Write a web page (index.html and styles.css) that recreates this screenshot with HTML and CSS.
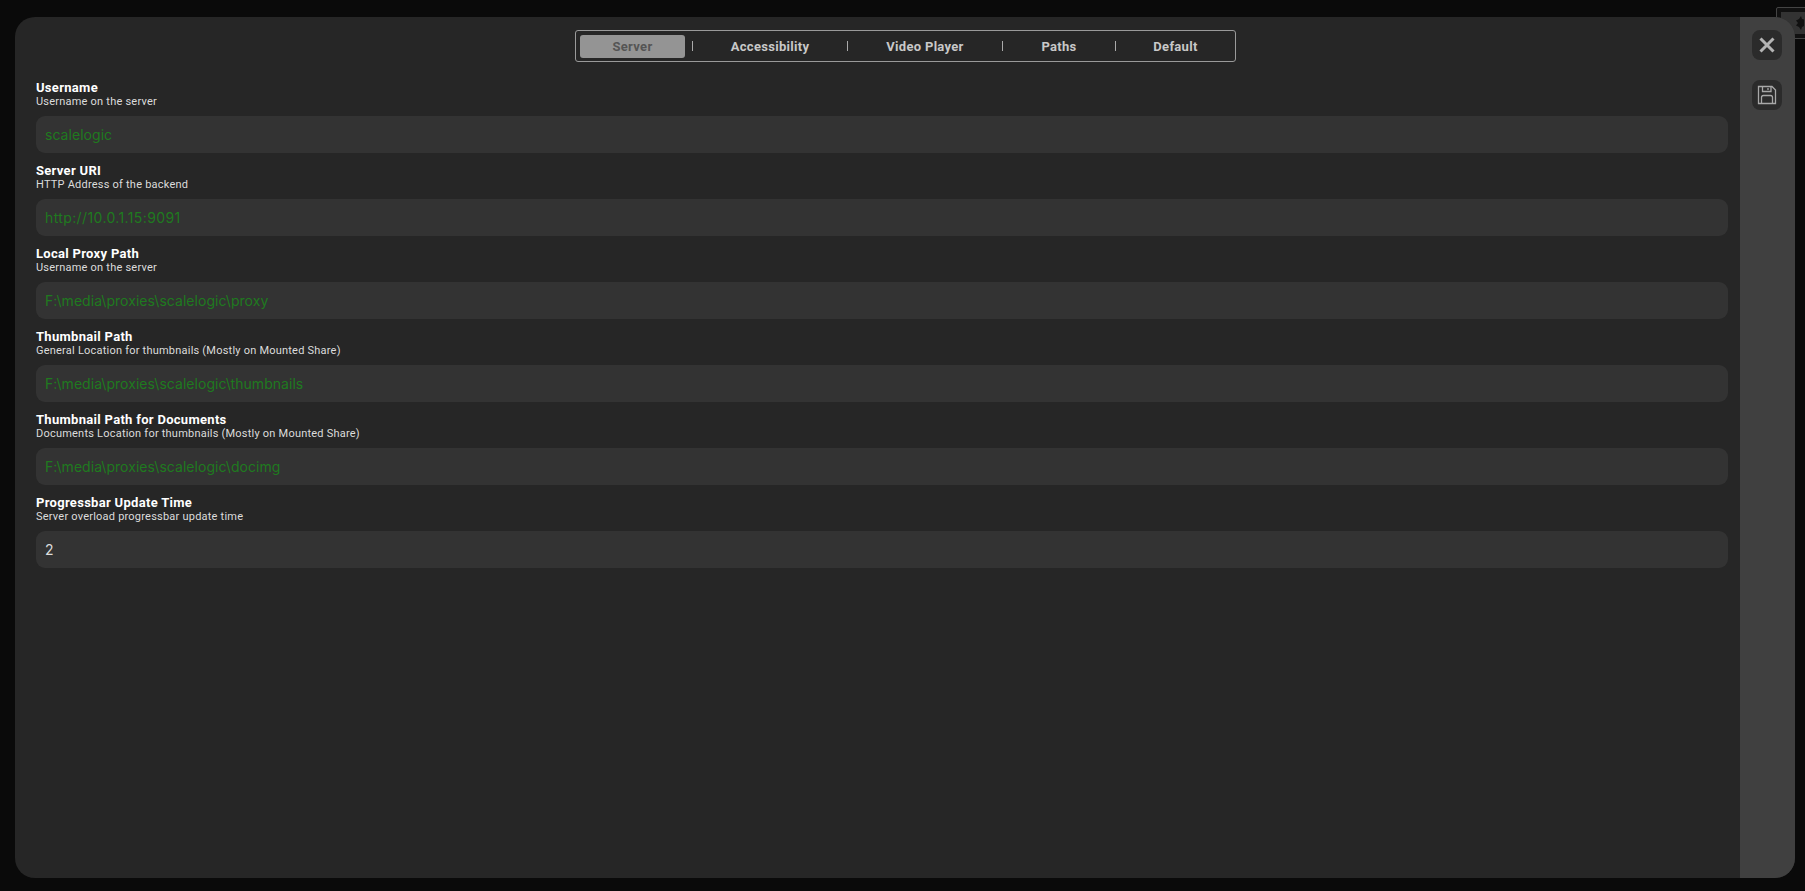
FILE: index.html
```html
<!DOCTYPE html>
<html lang="en">
<head>
<meta charset="utf-8">
<title>Settings</title>
<link rel="stylesheet" href="styles.css">
</head>
<body>
<div class="backdrop-tab"><div class="backdrop-inner"><svg width="8" height="14" viewBox="0 0 8 14"><path d="M5 0L6 3L8 3.5V10L6 11L5 14L3 11L0 9.500L2 7L0 4.500L3 3Z" fill="#111"/></svg></div></div>
<div class="modal">
  <main class="content">
    <nav class="tabs">
      <div class="tab active">Server</div><span class="sep"></span>
      <div class="tab t2">Accessibility</div><span class="sep"></span>
      <div class="tab t3">Video Player</div><span class="sep"></span>
      <div class="tab t4">Paths</div><span class="sep"></span>
      <div class="tab t5">Default</div>
    </nav>
    <section class="field">
      <div class="label">Username</div>
      <div class="hint">Username on the server</div>
      <div class="input green">scalelogic</div>
    </section>
    <section class="field">
      <div class="label">Server URI</div>
      <div class="hint">HTTP Address of the backend</div>
      <div class="input green uri">http://10.0.1.15:9091</div>
    </section>
    <section class="field">
      <div class="label">Local Proxy Path</div>
      <div class="hint">Username on the server</div>
      <div class="input green">F:\media\proxies\scalelogic\proxy</div>
    </section>
    <section class="field">
      <div class="label">Thumbnail Path</div>
      <div class="hint">General Location for thumbnails (Mostly on Mounted Share)</div>
      <div class="input green">F:\media\proxies\scalelogic\thumbnails</div>
    </section>
    <section class="field">
      <div class="label">Thumbnail Path for Documents</div>
      <div class="hint">Documents Location for thumbnails (Mostly on Mounted Share)</div>
      <div class="input green">F:\media\proxies\scalelogic\docimg</div>
    </section>
    <section class="field">
      <div class="label">Progressbar Update Time</div>
      <div class="hint">Server overload progressbar update time</div>
      <div class="input plain">2</div>
    </section>
  </main>
  <aside class="side">
    <button class="icon-btn" aria-label="Close">
      <svg width="18" height="18" viewBox="0 0 18 18"><path d="M2.500 2.500L15.500 15.500M15.500 2.500L2.500 15.500" fill="none" stroke="#b4b4b4" stroke-width="3"/></svg>
    </button>
    <button class="icon-btn" aria-label="Save">
      <svg width="20" height="20" viewBox="0 0 20 20" fill="none" stroke="#a8a8a8" stroke-width="1.300"><path d="M1.500 1.500H15L18.500 5V18.500H1.500Z"/><path d="M5.500 1.500V6.500H14V1.500"/><path d="M11 3V5"/><path d="M4.500 18.500V12.500Q4.500 10.500 6.500 10.500H13.500Q15.500 10.500 15.500 12.500V18.500"/></svg>
    </button>
  </aside>
</div>
</body>
</html>
```
FILE: styles.css
```css
* { box-sizing: border-box; }
html, body { height: 100%; }
body {
  margin: 0;
  background: #0a0a0a;
  padding: 17px 10px 13px 15px;
  overflow: hidden;
  font-family: Roboto, "Liberation Sans", sans-serif;
}
.backdrop-tab {
  position: absolute;
  left: 1776px;
  top: 7px;
  width: 40px;
  height: 32px;
  padding: 4px 0 4px 4px;
  border: 1px solid #444;
  border-radius: 2px;
  background: #111;
}
.backdrop-inner {
  display: flex;
  justify-content: flex-end;
  align-items: center;
  height: 100%;
  padding-right: 11px;
  background: #333;
}
.modal {
  position: relative;
  display: flex;
  height: 861px;
  border-radius: 20px;
  overflow: hidden;
  background: #262626;
}
.content {
  flex: 1;
  padding: 13px 12px 0 21px;
}
.tabs {
  display: flex;
  align-items: center;
  width: 661px;
  height: 32px;
  margin: 0 0 18px 539px;
  padding: 0 0 0 4px;
  border: 1px solid #9a9a9a;
  border-radius: 3px;
  color: #c8c8c8;
  font-size: 13px;
  font-weight: 700;
  letter-spacing: 0.3px;
}
.tab {
  text-align: center;
  line-height: 22px;
}
.tab:not(.active) {
  padding-top: 1px;
}
.tab.active {
  width: 105px;
  margin-right: 7px;
  padding-top: 1px;
  background: #949494;
  color: #555;
  border-radius: 3px;
}
.t2 { width: 154px; }
.t3 { width: 154px; }
.t4 { width: 112px; }
.t5 { flex: 1; }
.sep {
  flex: none;
  width: 1px;
  height: 10px;
  background: #aaa;
}
.field {
  height: 83px;
  padding-top: 1px;
}
.label {
  color: #fff;
  font-size: 13px;
  font-weight: 700;
  line-height: 14px;
  letter-spacing: 0.3px;
}
.hint {
  color: #dcdcdc;
  font-size: 11px;
  line-height: 14px;
  letter-spacing: 0.22px;
}
.input {
  height: 37px;
  margin-top: 7px;
  padding-left: 9px;
  border-radius: 9px;
  background: #333;
  font-family: Inter, "Liberation Sans", sans-serif;
  font-size: 14px;
  letter-spacing: 0.04px;
  line-height: 37px;
}
.uri { letter-spacing: 0.38px; }
.green { color: #1f7a1f; }
.plain { color: #ddd; }
.side {
  flex: none;
  width: 55px;
  background: #404040;
  display: flex;
  flex-direction: column;
  align-items: center;
  padding: 13px 1px 0 0;
  gap: 20px;
}
.icon-btn {
  width: 30px;
  height: 30px;
  padding: 0;
  border: 0;
  border-radius: 8px;
  background: #2b2b2b;
  display: flex;
  align-items: center;
  justify-content: center;
}
```
